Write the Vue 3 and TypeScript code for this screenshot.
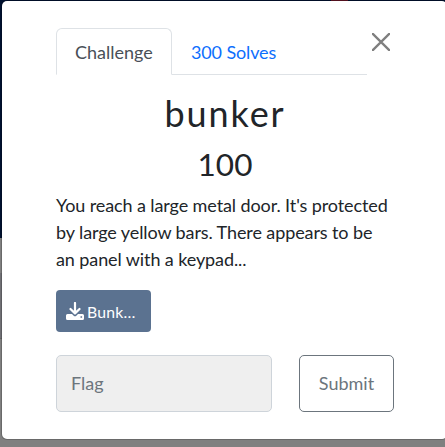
<script setup lang="ts">
import { ref } from 'vue'

interface Challenge {
  name: string
  value: number
  solves: number
  description: string
  file: string
}

const challenge: Challenge = {
  name: 'bunker',
  value: 100,
  solves: 300,
  description:
    "You reach a large metal door. It's protected by large yellow bars. There appears to be an panel with a keypad...",
  file: 'Bunk…',
}
const flag = ref('')
</script>

<template>
  <div class="page">
    <div class="hero"><span class="mark"></span></div>
    <div class="band"></div>
    <div class="card"></div>
    <div class="modal">
      <header class="head">
        <nav class="tabs">
          <a class="tab active">Challenge</a>
          <a class="tab">{{ challenge.solves }} Solves</a>
        </nav>
        <button class="close" type="button" aria-label="Close">
          <svg viewBox="0 0 18 18" width="18" height="18">
            <path d="M.8.8 17.2 17.2M17.2.8.8 17.2" fill="none" stroke="#7f7f7f" stroke-width="2.3" stroke-linecap="round" />
          </svg>
        </button>
      </header>
      <h2 class="name">{{ challenge.name }}</h2>
      <h3 class="value">{{ challenge.value }}</h3>
      <p class="desc">{{ challenge.description }}</p>
      <a class="file">
        <svg viewBox="0 0 18 18" width="18" height="18">
          <path d="M9 1v10M4.5 7 9 11.4 13.500 7" fill="none" stroke="#fff" stroke-width="2.2" stroke-linecap="round" stroke-linejoin="round" />
          <path fill="#fff" fill-rule="evenodd" d="M1.500 12H6l1.700 1.700q1.300 1 2.600 0L12 12h4.500Q18 12 18 13.500v3Q18 18 16.500 18h-15Q0 18 0 16.500v-3Q0 12 1.500 12M14.500 14.200v1.600h1.600v-1.600z" />
        </svg>
        <span>{{ challenge.file }}</span>
      </a>
      <form class="answer" @submit.prevent>
        <input v-model="flag" class="flag" type="text" placeholder="Flag" />
        <button class="submit" type="submit">Submit</button>
      </form>
    </div>
  </div>
</template>

<style>
body {
  background: #808080;
  overflow: hidden;
}
</style>

<style scoped>
.page {
  position: relative;
  height: 447px;
  overflow: hidden;
  font-family: Lato, "Liberation Sans", sans-serif;
  font-size: 18px;
  line-height: 27px;
  color: #212529;
}
.page * {
  box-sizing: border-box;
}
.hero {
  display: flex;
  height: 238px;
  padding-left: 331px;
  background: #00112f;
}
.mark {
  width: 17px;
  height: 1px;
  background: #651425;
}
.band {
  height: 35px;
}
.card {
  height: 66px;
  background: #707074;
  border-bottom: 1px solid #646464;
}
.modal {
  position: absolute;
  top: 1px;
  left: 2px;
  width: 445px;
  height: 438px;
  padding: 27px 53px 27px 54px;
  background: #fff;
  border-radius: 5px;
  box-shadow: 0 0 0 1px rgba(0, 0, 0, 0.18);
}
.head {
  display: flex;
  align-items: flex-start;
  height: 47px;
}
.tabs {
  display: flex;
  width: 311px;
  height: 47px;
  border-bottom: 1px solid #dee2e6;
}
.tab {
  height: 47px;
  padding: 10px 18px 9px;
  border: 1px solid transparent;
  color: #0d6efd;
  letter-spacing: -0.13px;
  white-space: nowrap;
}
.active {
  width: 116px;
  letter-spacing: 0;
  color: #495057;
  background: #fff;
  border-color: #dee2e6 #dee2e6 #fff;
  border-radius: 6px 6px 0 0;
}
.close {
  display: flex;
  margin: 5px 0 0 5px;
  padding: 0;
  border: 0;
  background: none;
}
.name {
  margin: 17px 0 10px;
  font-size: 36px;
  line-height: 43px;
  font-weight: 400;
  letter-spacing: 1.9px;
  text-align: center;
}
.value {
  margin: 0 0 9px;
  font-size: 31.5px;
  line-height: 38px;
  font-weight: 400;
  text-align: center;
}
.desc {
  margin: 0 0 17px;
  letter-spacing: -0.1px;
}
.file {
  display: flex;
  align-items: center;
  gap: 4px;
  width: 95px;
  height: 42px;
  padding: 0 10px;
  border-radius: 4px;
  background: #5b7290;
  color: #fff;
  font-size: 15.75px;
}
.file span {
  margin-left: -1px;
  letter-spacing: 0.25px;
}
.answer {
  display: flex;
  justify-content: space-between;
  margin-top: 23px;
}
.flag,
.submit {
  height: 57px;
  margin: 0;
  font: inherit;
  border-radius: 5px;
}
.flag {
  width: 216px;
  padding: 0 14px 2px;
  border: 1px solid #ced4da;
  background: #efefef;
  color: #495057;
}
.flag::placeholder {
  color: #6c757d;
  opacity: 1;
}
.submit {
  width: 95px;
  padding: 0;
  border: 1px solid #6c757d;
  background: #fff;
  color: #6c757d;
}
</style>
